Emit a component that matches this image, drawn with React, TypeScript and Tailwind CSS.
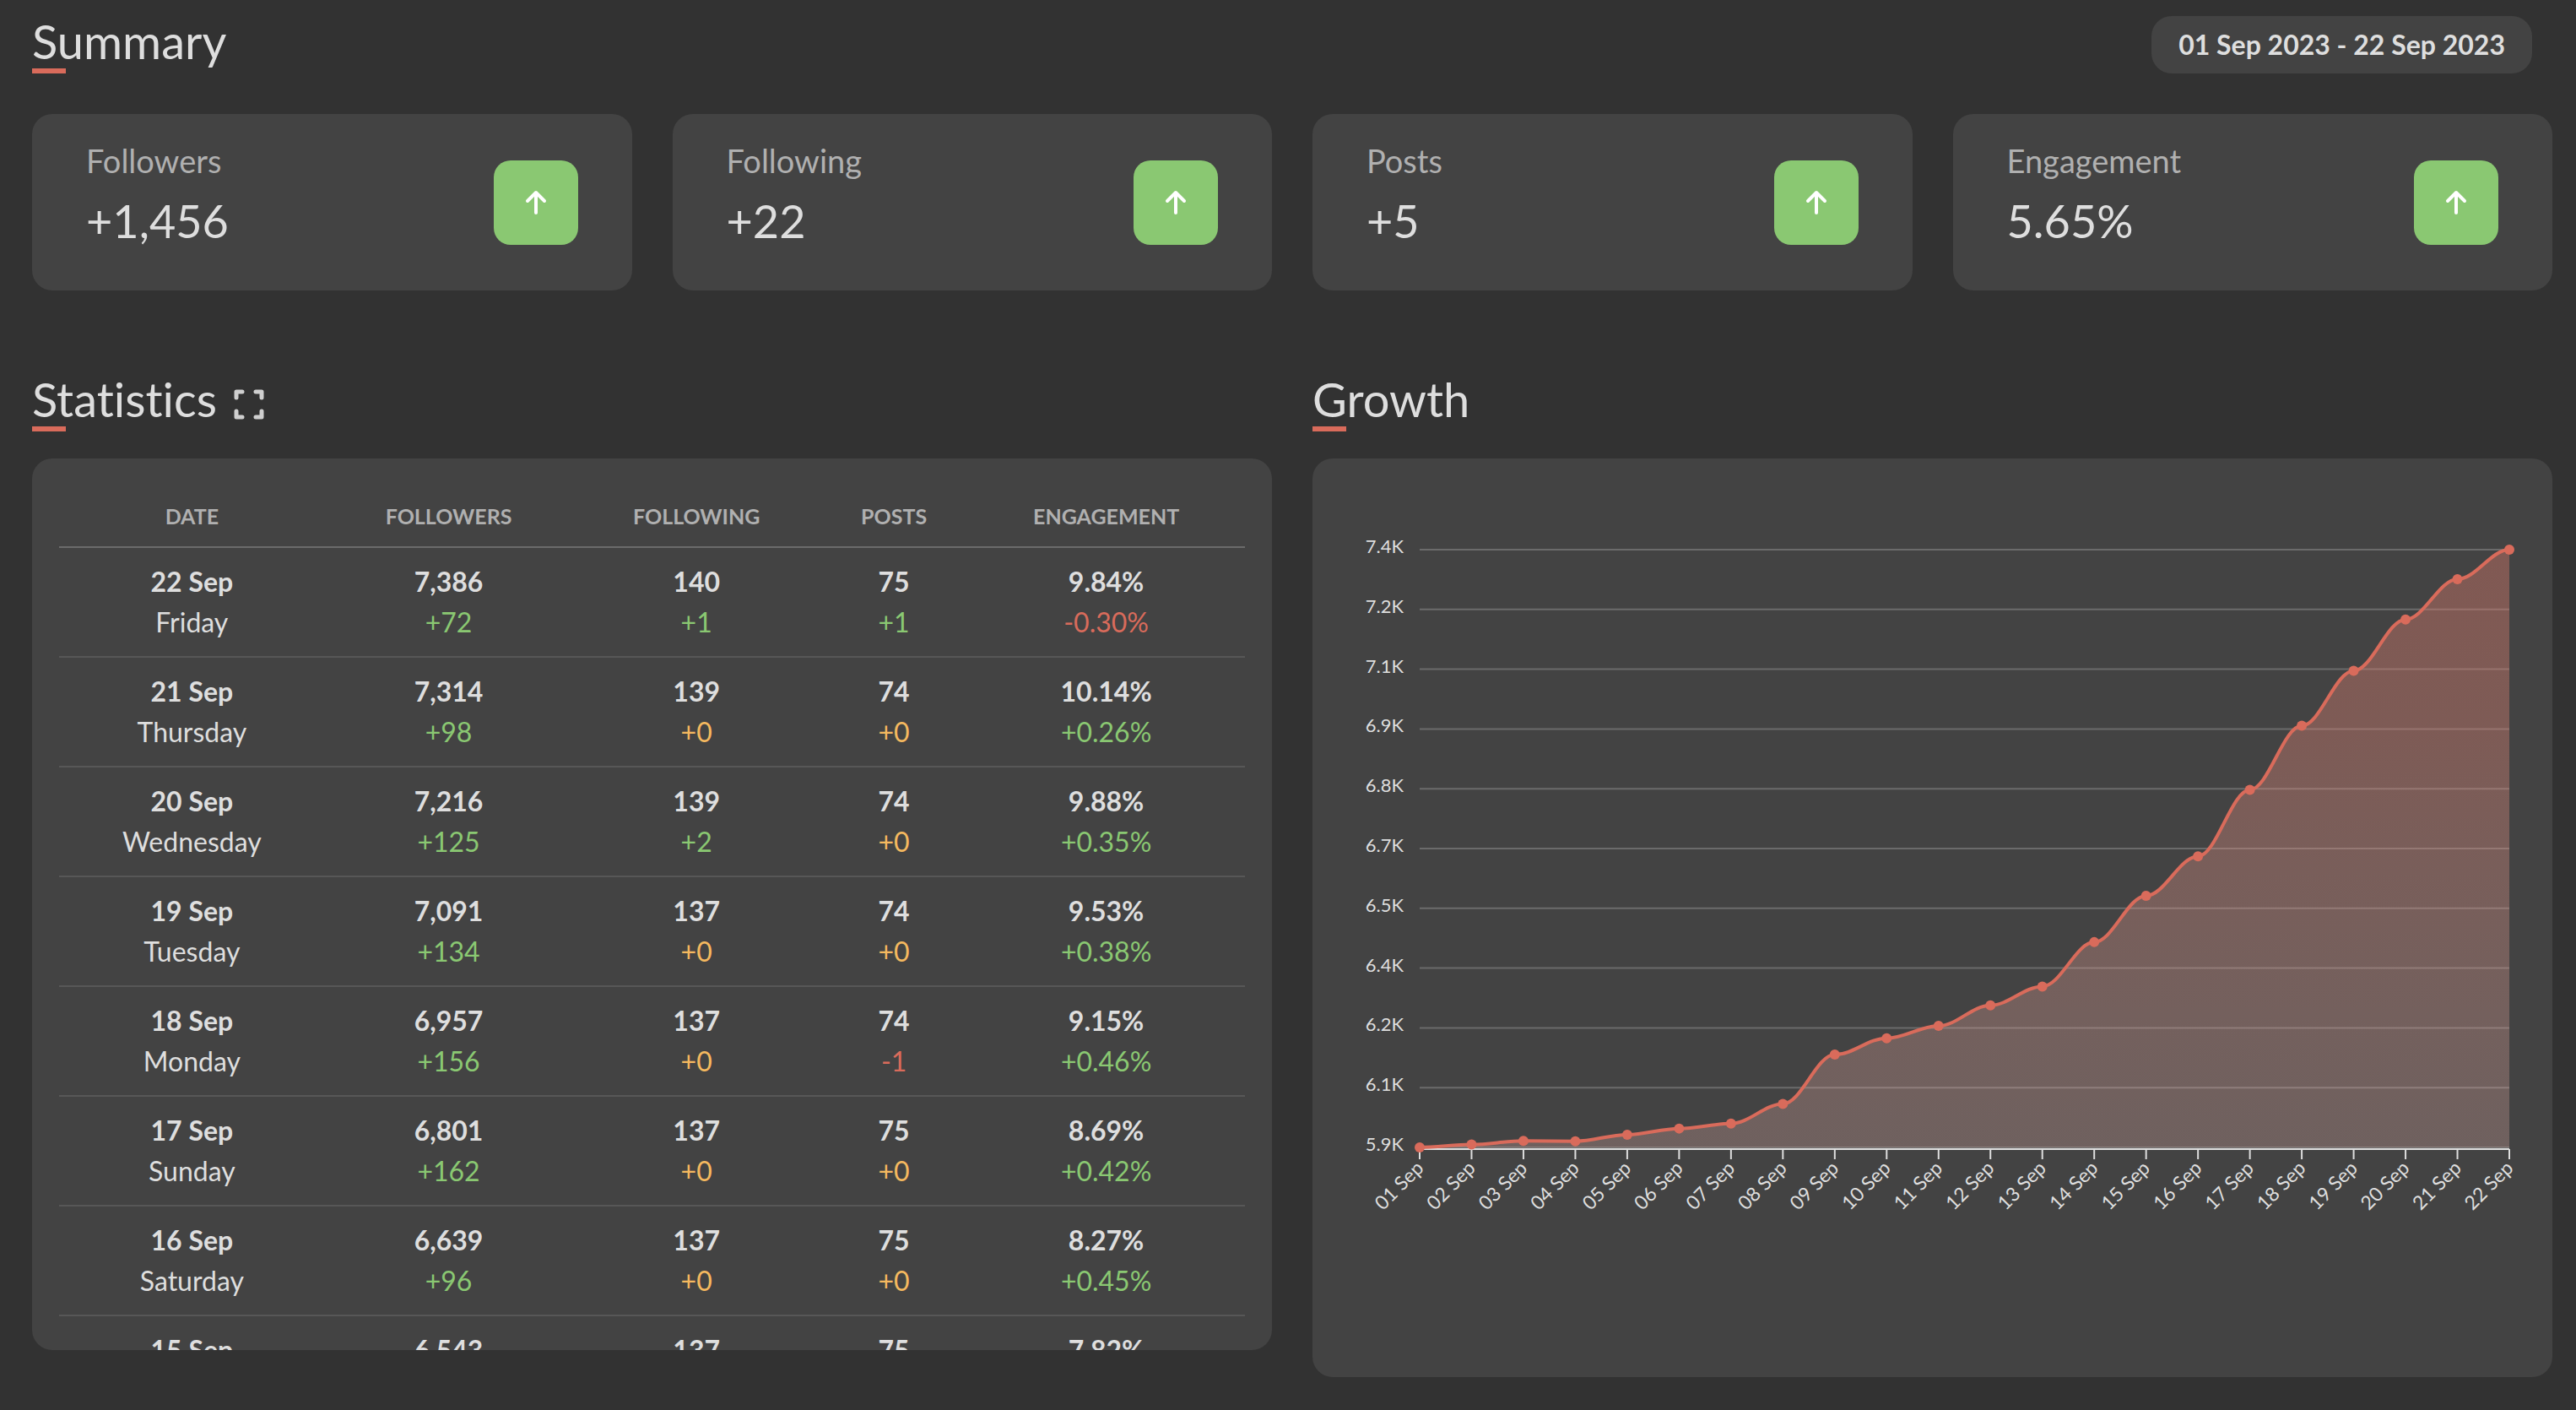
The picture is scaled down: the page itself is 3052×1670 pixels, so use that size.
import { useId } from "react";

type Day = {
  date: string;
  weekday: string;
  followers: [string, string];
  following: [string, string];
  posts: [string, string];
  engagement: [string, string];
};

const summary = [
  { label: "Followers", value: "+1,456" },
  { label: "Following", value: "+22" },
  { label: "Posts", value: "+5" },
  { label: "Engagement", value: "5.65%" },
];

const days: Day[] = [
  { date: "22 Sep", weekday: "Friday", followers: ["7,386", "+72"], following: ["140", "+1"], posts: ["75", "+1"], engagement: ["9.84%", "-0.30%"] },
  { date: "21 Sep", weekday: "Thursday", followers: ["7,314", "+98"], following: ["139", "+0"], posts: ["74", "+0"], engagement: ["10.14%", "+0.26%"] },
  { date: "20 Sep", weekday: "Wednesday", followers: ["7,216", "+125"], following: ["139", "+2"], posts: ["74", "+0"], engagement: ["9.88%", "+0.35%"] },
  { date: "19 Sep", weekday: "Tuesday", followers: ["7,091", "+134"], following: ["137", "+0"], posts: ["74", "+0"], engagement: ["9.53%", "+0.38%"] },
  { date: "18 Sep", weekday: "Monday", followers: ["6,957", "+156"], following: ["137", "+0"], posts: ["74", "-1"], engagement: ["9.15%", "+0.46%"] },
  { date: "17 Sep", weekday: "Sunday", followers: ["6,801", "+162"], following: ["137", "+0"], posts: ["75", "+0"], engagement: ["8.69%", "+0.42%"] },
  { date: "16 Sep", weekday: "Saturday", followers: ["6,639", "+96"], following: ["137", "+0"], posts: ["75", "+0"], engagement: ["8.27%", "+0.45%"] },
  { date: "15 Sep", weekday: "Friday", followers: ["6,543", "+113"], following: ["137", "+0"], posts: ["75", "+0"], engagement: ["7.82%", "+0.41%"] },
];

// followers per day, 01 Sep - 22 Sep
const growth = [
  5930, 5937, 5946, 5945, 5961, 5976, 5988, 6036, 6156, 6196, 6226,
  6276, 6322, 6430, 6543, 6639, 6801, 6957, 7091, 7216, 7314, 7386,
];

const yLabels = ["7.4K", "7.2K", "7.1K", "6.9K", "6.8K", "6.7K", "6.5K", "6.4K", "6.2K", "6.1K", "5.9K"];

function deltaColor(delta: string) {
  if (delta === "+0") return "text-[#f5b95f]";
  return delta.startsWith("-") ? "text-[#d96b5b]" : "text-[#8ac872]";
}

function Title({ children }: { children: string }) {
  return (
    <h2 className="pt-1 text-[56px] leading-[64px] text-[#dedede] font-normal after:block after:w-10 after:h-[6px] after:bg-[#d96b5b]">
      {children}
    </h2>
  );
}

function ArrowUp() {
  return (
    <svg viewBox="0 0 40 40" className="size-10" fill="none" stroke="#fff" strokeWidth="4" strokeLinecap="round" strokeLinejoin="round">
      <path d="M20 32V8M10 18L20 8L30 18" />
    </svg>
  );
}

function SummaryCard({ label, value }: { label: string; value: string }) {
  return (
    <div className="flex items-center justify-between px-16 h-[209px] rounded-3xl bg-[#434343]">
      <div className="flex flex-col pb-4">
        <span className="text-[38px] leading-[60px] text-[#b0b0b0]">{label}</span>
        <span className="text-[54px] leading-[84px] text-[#dedede]">{value}</span>
      </div>
      <div className="flex items-center justify-center size-[100px] rounded-[20px] bg-[#8ac872]">
        <ArrowUp />
      </div>
    </div>
  );
}

function Cell({ value, delta }: { value: string; delta: string }) {
  return (
    <td className="py-4">
      <div className="font-bold">{value}</div>
      <div className={deltaColor(delta)}>{delta}</div>
    </td>
  );
}

function StatisticsTable() {
  return (
    <div className="h-[1056px] p-8 pb-0 overflow-y-auto [scrollbar-width:none] rounded-3xl bg-[#434343]">
      <table className="w-full table-fixed border-collapse text-center text-[32px] leading-[48px] text-[#dedede]">
        <colgroup>
          <col className="w-[22.4%]" />
          <col className="w-[20.9%]" />
          <col className="w-[20.9%]" />
          <col className="w-[12.4%]" />
          <col className="w-[23.4%]" />
        </colgroup>
        <thead>
          <tr className="h-[73px] border-b-2 border-[#6b6b6b] text-[25px] leading-[40px] uppercase text-[#b0b0b0]">
            <th className="font-bold">Date</th>
            <th className="font-bold">Followers</th>
            <th className="font-bold">Following</th>
            <th className="font-bold">Posts</th>
            <th className="font-bold">Engagement</th>
          </tr>
        </thead>
        <tbody>
          {days.map((day) => (
            <tr key={day.date} className="h-[130px] border-b-2 border-[#575757]">
              <td className="py-4">
                <div className="font-bold">{day.date}</div>
                <div>{day.weekday}</div>
              </td>
              <Cell value={day.followers[0]} delta={day.followers[1]} />
              <Cell value={day.following[0]} delta={day.following[1]} />
              <Cell value={day.posts[0]} delta={day.posts[1]} />
              <Cell value={day.engagement[0]} delta={day.engagement[1]} />
            </tr>
          ))}
        </tbody>
      </table>
    </div>
  );
}

const LEFT = 127;
const RIGHT = 1418;
const TOP = 108;
const BOTTOM = 816;

function GrowthChart() {
  const fillId = useId();
  const min = growth[0];
  const max = growth[growth.length - 1];
  const step = (RIGHT - LEFT) / (growth.length - 1);

  const points = growth.map((value, i) => ({
    x: LEFT + i * step,
    y: BOTTOM - ((value - min) / (max - min)) * (BOTTOM - TOP),
  }));

  const bend = step * 0.35;
  const line = points
    .map((p, i) => {
      if (i === 0) return `M${p.x} ${p.y}`;
      const prev = points[i - 1];
      return `C${prev.x + bend} ${prev.y} ${p.x - bend} ${p.y} ${p.x} ${p.y}`;
    })
    .join("");

  return (
    <svg viewBox="0 0 1469 1088" className="w-full h-auto" role="img" aria-label="Followers growth">
      <defs>
        <linearGradient id={fillId} x1="0" y1="0" x2="0" y2="1">
          <stop offset="0" stopColor="#de7a6b" stopOpacity="0.4" />
          <stop offset="0.3" stopColor="#e28475" stopOpacity="0.37" />
          <stop offset="1" stopColor="#ecb5ad" stopOpacity="0.26" />
        </linearGradient>
      </defs>

      {yLabels.map((label, i) => {
        const y = TOP + (i * (BOTTOM - TOP)) / (yLabels.length - 1);
        return (
          <g key={label}>
            <line x1={LEFT} x2={RIGHT} y1={y} y2={y} stroke="#6b6b6b" strokeWidth="2" />
            <text x="108" y={y + 4} textAnchor="end" className="text-[22px] fill-[#dedede]">
              {label}
            </text>
          </g>
        );
      })}

      <path d={`${line}L${RIGHT} ${BOTTOM}L${LEFT} ${BOTTOM}Z`} fill={`url(#${fillId})`} />
      <line x1={LEFT} x2={RIGHT} y1={BOTTOM + 2} y2={BOTTOM + 2} stroke="#dedede" strokeWidth="2" />

      {points.map((p, i) => (
        <g key={i}>
          <line x1={p.x} x2={p.x} y1={BOTTOM + 2} y2={BOTTOM + 14} stroke="#dedede" strokeWidth="2" />
          <text
            x={p.x + 6}
            y={BOTTOM + 26}
            textAnchor="end"
            transform={`rotate(-45 ${p.x + 6} ${BOTTOM + 26})`}
            className="text-[23px] fill-[#dedede]"
          >
            {`${String(i + 1).padStart(2, "0")} Sep`}
          </text>
        </g>
      ))}

      <path d={line} fill="none" stroke="#d96b5b" strokeWidth="4" />
      {points.map((p, i) => (
        <circle key={i} cx={p.x} cy={p.y} r="6" fill="#d96b5b" />
      ))}
    </svg>
  );
}

export default function App() {
  return (
    <main className="min-h-screen pl-[38px] pr-7 pt-[13px] pb-[39px] bg-[#323232] font-['Lato','Liberation_Sans',sans-serif] [font-variant-ligatures:none]">
      <header className="flex items-start justify-between pr-6">
        <Title>Summary</Title>
        <button type="button" className="mt-[6px] h-[68px] px-8 rounded-3xl bg-[#434343] text-[32px] font-bold text-[#dedede]">
          01 Sep 2023 - 22 Sep 2023
        </button>
      </header>

      <section className="grid grid-cols-4 gap-12 mt-12">
        {summary.map((item) => (
          <SummaryCard key={item.label} label={item.label} value={item.value} />
        ))}
      </section>

      <div className="grid grid-cols-2 gap-12 items-start mt-[93px]">
        <section>
          <div className="flex items-start gap-5 mb-8">
            <Title>Statistics</Title>
            <button type="button" aria-label="Expand statistics" className="mt-6">
              <svg viewBox="0 0 36 36" className="size-9" fill="none" stroke="#cfcfcf" strokeWidth="5" strokeLinecap="round" strokeLinejoin="round">
                <path d="M3 10V3H10M26 3H33V10M33 26V33H26M10 33H3V26" />
              </svg>
            </button>
          </div>
          <StatisticsTable />
        </section>

        <section>
          <div className="mb-8">
            <Title>Growth</Title>
          </div>
          <div className="rounded-3xl bg-[#434343]">
            <GrowthChart />
          </div>
        </section>
      </div>
    </main>
  );
}
